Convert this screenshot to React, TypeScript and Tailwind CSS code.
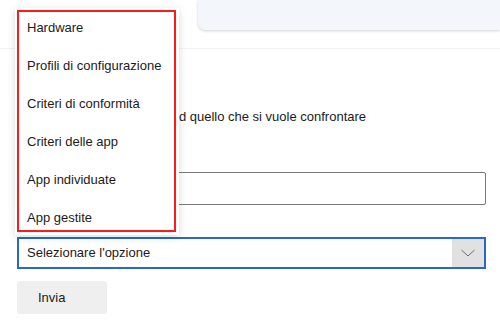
export default function App() {
  const voci = [
    "Hardware",
    "Profili di configurazione",
    "Criteri di conformità",
    "Criteri delle app",
    "App individuate",
    "App gestite",
  ];

  return (
    <div
      className="relative w-[500px] h-[328px] overflow-hidden bg-white text-[13px] text-[#1b1b1b]"
      style={{ fontFamily: '"Liberation Sans", Arial, sans-serif' }}
    >
      {/* Intestazione */}
      <div className="h-[49px] border-b border-[#f2f2f2] flex">
        <div className="ml-[198px] flex-1 h-[30px] bg-[#f3f6fa] rounded-bl-[7px] shadow-[0_1px_3px_rgba(0,0,0,0.18)]" />
      </div>

      {/* Modulo */}
      <div className="pl-[17px] w-[486px]">
        <div className="mt-[59px] h-[18px] leading-[18px] whitespace-nowrap">
          Selezionare un dispositivo ed quello che si vuole confrontare
        </div>
        <div className="mt-[46px] h-[33px] border border-[#7a7a7a] rounded-[2px]" />
        <div className="mt-[32px] h-[32px] border-2 border-[#2b69c8] flex items-center">
          <span className="flex-1 pl-[8px]">Selezionare l'opzione</span>
          <span className="w-[32px] h-full bg-[#e1e1e1] flex items-center justify-center">
            <svg width="14" height="8" viewBox="0 0 14 8" fill="none">
              <polyline points="0.5,1 7,7 13.5,1" stroke="#6b6b6b" strokeWidth="1" />
            </svg>
          </span>
        </div>
        <button className="mt-[12px] w-[90px] h-[33px] bg-[#efefef] rounded-[3px] text-left pl-[21px]">
          Invia
        </button>
      </div>

      {/* Menu a discesa */}
      <div className="absolute left-[15px] top-[8px] w-[164px] h-[227px] bg-white shadow-[0_2px_8px_rgba(0,0,0,0.14)] pt-[2px] pl-[2px]">
        <div className="w-[159px] h-[222px] border-2 border-[#ff1a1a] pt-[6px] pl-[8px] flex flex-col gap-[18px]">
          {voci.map((v) => (
            <div key={v} className="h-[20px] flex items-center whitespace-nowrap">
              {v}
            </div>
          ))}
        </div>
      </div>
    </div>
  );
}
